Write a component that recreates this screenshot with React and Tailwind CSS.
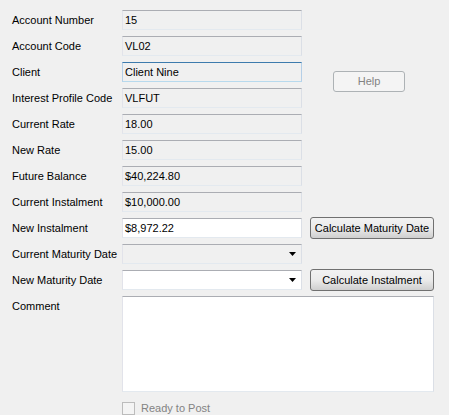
import React from 'react';

const FONT = { fontFamily: '"Liberation Sans", Arial, sans-serif' };

const ROWS = [
  { label: 'Account Number', value: '15', kind: 'readonly' },
  { label: 'Account Code', value: 'VL02', kind: 'readonly' },
  { label: 'Client', value: 'Client Nine', kind: 'hover' },
  { label: 'Interest Profile Code', value: 'VLFUT', kind: 'readonly' },
  { label: 'Current Rate', value: '18.00', kind: 'readonly' },
  { label: 'New Rate', value: '15.00', kind: 'readonly' },
  { label: 'Future Balance', value: '$40,224.80', kind: 'readonly' },
  { label: 'Current Instalment', value: '$10,000.00', kind: 'readonly' },
  { label: 'New Instalment', value: '$8,972.22', kind: 'edit', button: 'Calculate Maturity Date' },
  { label: 'Current Maturity Date', value: '', kind: 'combo-disabled' },
  { label: 'New Maturity Date', value: '', kind: 'combo', button: 'Calculate Instalment' },
];

function Field({ row }) {
  if (row.kind === 'combo' || row.kind === 'combo-disabled') {
    const bg = row.kind === 'combo' ? 'bg-white' : 'bg-[#f0f0f0]';
    return (
      <div className={`h-[20px] flex items-center justify-end pr-[5px] border border-[#abadb3] border-t-[#abadb3] border-l-[#e2e3ea] border-r-[#dbdfe6] border-b-[#e3e9ef] ${bg}`}>
        <svg width="7" height="4" viewBox="0 0 7 4">
          <path d="M0 0 H7 L3.5 4 Z" fill="#000" />
        </svg>
      </div>
    );
  }
  let cls = 'bg-[#f0f0f0] border-t-[#abadb3] border-l-[#e2e3ea] border-r-[#dbdfe6] border-b-[#e3e9ef]';
  if (row.kind === 'edit') cls = 'bg-white border-t-[#abadb3] border-l-[#e2e3ea] border-r-[#dbdfe6] border-b-[#e3e9ef]';
  if (row.kind === 'hover') cls = 'bg-[#f0f0f0] border-t-[#3d7bad] border-l-[#b5cfe7] border-r-[#b5cfe7] border-b-[#b7d9ed]';
  return (
    <div className={`h-[20px] border flex items-center pl-[2px] text-[11px] text-black ${cls}`}>
      {row.value}
    </div>
  );
}

function WinButton({ children }) {
  return (
    <div className="-mt-[1px] h-[22px] rounded-[3px] border border-[#707070] bg-gradient-to-b from-[#f2f2f2] via-[#ebebeb] to-[#cfcfcf] flex items-center justify-center text-[11px] text-black">
      {children}
    </div>
  );
}

export default function App() {
  return (
    <div className="w-[449px] h-[415px] overflow-hidden bg-[#f0f0f0] pt-[10px] pl-[12px]" style={FONT}>
      <div className="grid grid-cols-[102px_180px_124px] grid-rows-[repeat(11,20px)_96px] gap-x-[8px] gap-y-[6px]">
        {ROWS.map((row, i) => (
          <React.Fragment key={row.label}>
            <div className="text-[11px] text-black flex items-center leading-none whitespace-nowrap" style={{ gridRow: i + 1, gridColumn: 1 }}>
              {row.label}
            </div>
            <div style={{ gridRow: i + 1, gridColumn: 2 }}>
              <Field row={row} />
            </div>
            {row.button && (
              <div style={{ gridRow: i + 1, gridColumn: 3 }}>
                <WinButton>{row.button}</WinButton>
              </div>
            )}
          </React.Fragment>
        ))}
        <div className="col-start-3 row-start-3 row-span-2 self-start mt-[9px] ml-[23px] w-[72px] h-[21px] rounded-[3px] border border-[#adb2b5] bg-[#f4f4f4] flex items-center justify-center text-[11px] text-[#838383]">
          Help
        </div>
        <div className="col-start-1 row-start-12 text-[11px] text-black pt-[5px] leading-none">Comment</div>
        <div className="col-start-2 col-span-2 row-start-12 h-[96px] bg-white border border-t-[#abadb3] border-l-[#e2e3ea] border-r-[#dbdfe6] border-b-[#e3e9ef]" />
      </div>
      <div className="mt-[8px] ml-[110px] flex items-center gap-[6px]">
        <div className="w-[13px] h-[13px] border border-[#bcbcbc] bg-[#f4f4f4]" />
        <span className="text-[11px] text-[#838383]">Ready to Post</span>
      </div>
    </div>
  );
}
